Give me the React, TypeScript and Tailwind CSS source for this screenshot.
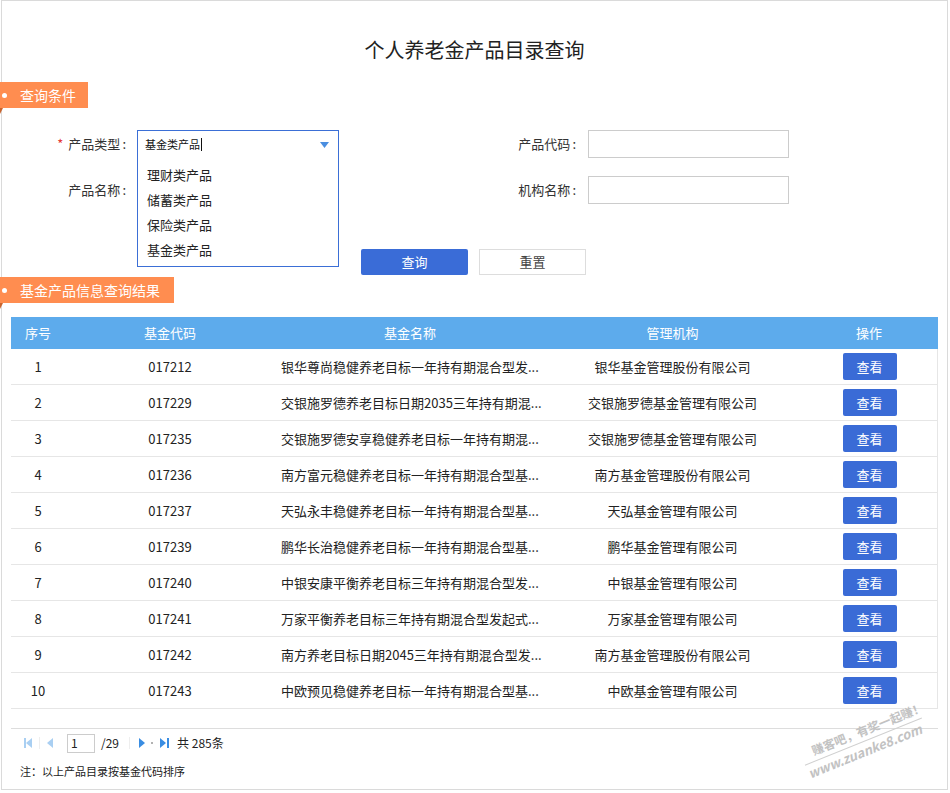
import React from "react";

const rows: [string, string, string, string][] = [
  ["1", "017212", "银华尊尚稳健养老目标一年持有期混合型发...", "银华基金管理股份有限公司"],
  ["2", "017229", "交银施罗德养老目标日期2035三年持有期混...", "交银施罗德基金管理有限公司"],
  ["3", "017235", "交银施罗德安享稳健养老目标一年持有期混...", "交银施罗德基金管理有限公司"],
  ["4", "017236", "南方富元稳健养老目标一年持有期混合型基...", "南方基金管理股份有限公司"],
  ["5", "017237", "天弘永丰稳健养老目标一年持有期混合型基...", "天弘基金管理有限公司"],
  ["6", "017239", "鹏华长治稳健养老目标一年持有期混合型基...", "鹏华基金管理有限公司"],
  ["7", "017240", "中银安康平衡养老目标三年持有期混合型发...", "中银基金管理有限公司"],
  ["8", "017241", "万家平衡养老目标三年持有期混合型发起式...", "万家基金管理有限公司"],
  ["9", "017242", "南方养老目标日期2045三年持有期混合型发...", "南方基金管理股份有限公司"],
  ["10", "017243", "中欧预见稳健养老目标一年持有期混合型基...", "中欧基金管理有限公司"],
];

function Tag({ text, width }: { text: string; width: string }) {
  return (
    <div className={`relative -ml-[2px] flex h-[26px] items-center bg-[#ff8d50] text-[14px] text-white ${width}`}>
      <span className="ml-[2px] h-[5px] w-[5px] rounded-full bg-white" />
      <span className="ml-[13px] leading-none">{text}</span>
      <svg className="absolute left-0 top-full" width="3" height="6" viewBox="0 0 3 6">
        <polygon points="0,0 3,0 0,6" fill="#c9652f" />
      </svg>
    </div>
  );
}

function Label({ text, width, star }: { text: string; width: string; star?: boolean }) {
  return (
    <div className={`flex items-center justify-end ${width}`}>
      {star && <span className="mr-[5px] text-[#e53935]">*</span>}
      <span>{text}</span>
      <span className="ml-[2px]">:</span>
    </div>
  );
}

export default function App() {
  return (
    <div className="relative ml-px h-[790px] w-[947px] border border-[#dadada] bg-white font-['Microsoft_YaHei','Noto_Sans_CJK_SC',sans-serif] text-[#333]">
      {/* title */}
      <div className="mt-[35px] h-[28px] text-center text-[20px] leading-[28px] text-[#222]">
        个人养老金产品目录查询
      </div>

      <div className="mt-[18px]">
        <Tag text="查询条件" width="w-[88px]" />
      </div>

      {/* form row 1 */}
      <div className="mt-[22px] flex h-[28px] items-center text-[13px]">
        <Label text="产品类型" width="w-[124px]" star />
        <div className="relative ml-[11px] h-[28px] w-[202px]">
          <div className="absolute left-0 top-0 z-10 h-[137px] w-[202px] border border-[#3b6fd6] bg-white">
            <div className="relative flex h-[27px] items-center pl-[7px] text-[11px] text-[#111]">
              基金类产品
              <span className="ml-px h-[13px] w-px bg-[#111]" />
              <svg className="absolute right-[9px] top-[11px]" width="9" height="6" viewBox="0 0 9 6">
                <polygon points="0,0 9,0 4.5,6" fill="#4a8ee0" />
              </svg>
            </div>
            <div className="pt-[4px] text-[13px] text-[#222]">
              {["理财类产品", "储蓄类产品", "保险类产品", "基金类产品"].map((o) => (
                <div key={o} className="flex h-[25px] items-center pl-[9px]">
                  {o}
                </div>
              ))}
            </div>
          </div>
        </div>
        <Label text="产品代码" width="w-[237px]" />
        <div className="ml-[12px] h-[28px] w-[201px] border border-[#cccccc]" />
      </div>

      {/* form row 2 */}
      <div className="mt-[18px] flex h-[28px] items-center text-[13px]">
        <Label text="产品名称" width="w-[124px]" />
        <div className="ml-[11px] w-[202px]" />
        <Label text="机构名称" width="w-[237px]" />
        <div className="ml-[12px] h-[28px] w-[201px] border border-[#cccccc]" />
      </div>

      {/* buttons */}
      <div className="ml-[359px] mt-[45px] flex gap-[11px] text-[13px]">
        <div className="flex h-[26px] w-[107px] items-center justify-center rounded-[2px] bg-[#3a6cd7] text-white">
          查询
        </div>
        <div className="flex h-[26px] w-[107px] items-center justify-center border border-[#dddddd] bg-white text-[#444]">
          重置
        </div>
      </div>

      <div className="mt-[2px]">
        <Tag text="基金产品信息查询结果" width="w-[174px] h-[25px]" />
      </div>

      {/* table */}
      <div className="ml-[9px] mt-[14px] w-[927px] text-[13px]">
        <div className="grid h-[32px] grid-cols-[54px_210px_270px_255px_1fr] items-center bg-[#5dabec] text-white">
          <div className="text-center">序号</div>
          <div className="text-center">基金代码</div>
          <div className="text-center">基金名称</div>
          <div className="text-center">管理机构</div>
          <div className="text-center">操作</div>
        </div>
        {rows.map((r) => (
          <div
            key={r[0]}
            className="grid h-[36px] grid-cols-[54px_210px_270px_255px_1fr] items-center border-b border-r border-[#e6e6e6] text-[#222]"
          >
            <div className="text-center">{r[0]}</div>
            <div className="text-center">{r[1]}</div>
            <div className="whitespace-nowrap pl-[6px]">{r[2]}</div>
            <div className="text-center">{r[3]}</div>
            <div className="flex justify-center pl-[2px]">
              <div className="flex h-[27px] w-[54px] items-center justify-center rounded-[2px] bg-[#3a6bd6] text-white">
                查看
              </div>
            </div>
          </div>
        ))}

        {/* pagination */}
        <div className="mt-[19px] flex h-[29px] items-center border-t border-[#dddddd] text-[12px] text-[#222]">
          <svg className="ml-[13px]" width="8" height="10" viewBox="0 0 8 10">
            <rect x="0" y="0" width="2" height="10" fill="#a9cff2" />
            <polygon points="8,0 8,10 2,5" fill="#a9cff2" />
          </svg>
          <span className="ml-[7px] h-[12px] w-px bg-[#eeeeee]" />
          <svg className="ml-[7px]" width="6" height="10" viewBox="0 0 6 10">
            <polygon points="6,0 6,10 0,5" fill="#a9cff2" />
          </svg>
          <div className="ml-[14px] flex h-[19px] w-[28px] items-center border border-[#cccccc] pl-[3px] text-[12px]">
            1
          </div>
          <span className="ml-[6px]">/29</span>
          <span className="ml-[10px] h-[12px] w-px bg-[#eeeeee]" />
          <svg className="ml-[9px]" width="6" height="10" viewBox="0 0 6 10">
            <polygon points="0,0 0,10 6,5" fill="#3a8de2" />
          </svg>
          <span className="ml-[6px] h-[2px] w-[2px] rounded-full bg-[#999]" />
          <svg className="ml-[7px]" width="9" height="10" viewBox="0 0 9 10">
            <polygon points="0,0 0,10 6,5" fill="#3a8de2" />
            <rect x="7" y="0" width="2" height="10" fill="#3a8de2" />
          </svg>
          <span className="ml-[8px]">共 285条</span>
        </div>
      </div>

      <div className="ml-[18px] mt-[6px] text-[11px] leading-[16px] text-[#222]">
        注：以上产品目录按基金代码排序
      </div>

      {/* watermark */}
      <div className="pointer-events-none absolute left-[798px] top-[722px] -rotate-[22deg] text-[#c2c2c2]">
        <div className="ml-[12px] text-[12px] font-bold leading-[14px]">赚客吧，有奖一起赚！</div>
        <div className="mt-[3px] w-[126px] border-t border-[#d0d0d0]" />
        <div className="mt-[2px] text-[13px] font-bold italic leading-[14px]">www.zuanke8.com</div>
      </div>
    </div>
  );
}
